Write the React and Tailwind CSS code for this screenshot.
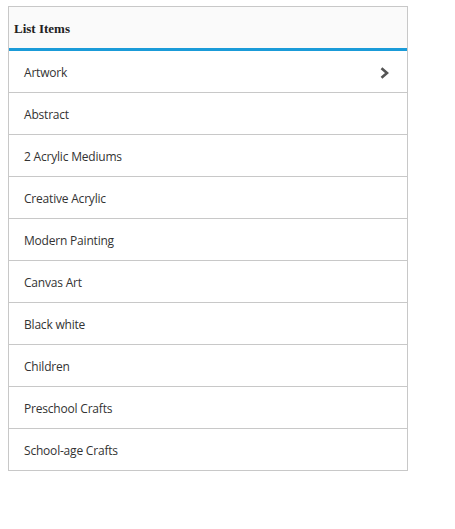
const items = [
  'Artwork',
  'Abstract',
  '2 Acrylic Mediums',
  'Creative Acrylic',
  'Modern Painting',
  'Canvas Art',
  'Black white',
  'Children',
  'Preschool Crafts',
  'School-age Crafts',
];

export default function App() {
  return (
    <div className="min-h-screen bg-white pt-[6px] pl-[8px]">
      <div className="w-[400px] border border-[#c8c8c8]">
        <div className="h-[44px] bg-[#fafafa] border-b-[3px] border-[#1a9bd8] flex items-center px-[5px] pt-[2px]">
          <span className="text-[13px] font-bold text-[#222]" style={{ fontFamily: '"Liberation Serif", serif' }}>
            List Items
          </span>
        </div>
        {items.map((item, i) => (
          <div
            key={item}
            className={`flex items-center justify-between pl-[15px] pr-[18px] pt-[2px] ${i < items.length - 1 ? 'h-[42px] border-b border-[#c8c8c8]' : 'h-[41px]'}`}
          >
            <span className="text-[12px] text-[#333] tracking-[-0.2px]" style={{ fontFamily: '"Open Sans", sans-serif' }}>
              {item}
            </span>
            {i === 0 && (
              <svg width="9" height="12" viewBox="0 0 9 12" className="text-[#555]">
                <path d="M1.5 1.2 L7 6 L1.5 10.8" fill="none" stroke="currentColor" strokeWidth="2.6" />
              </svg>
            )}
          </div>
        ))}
      </div>
    </div>
  );
}
